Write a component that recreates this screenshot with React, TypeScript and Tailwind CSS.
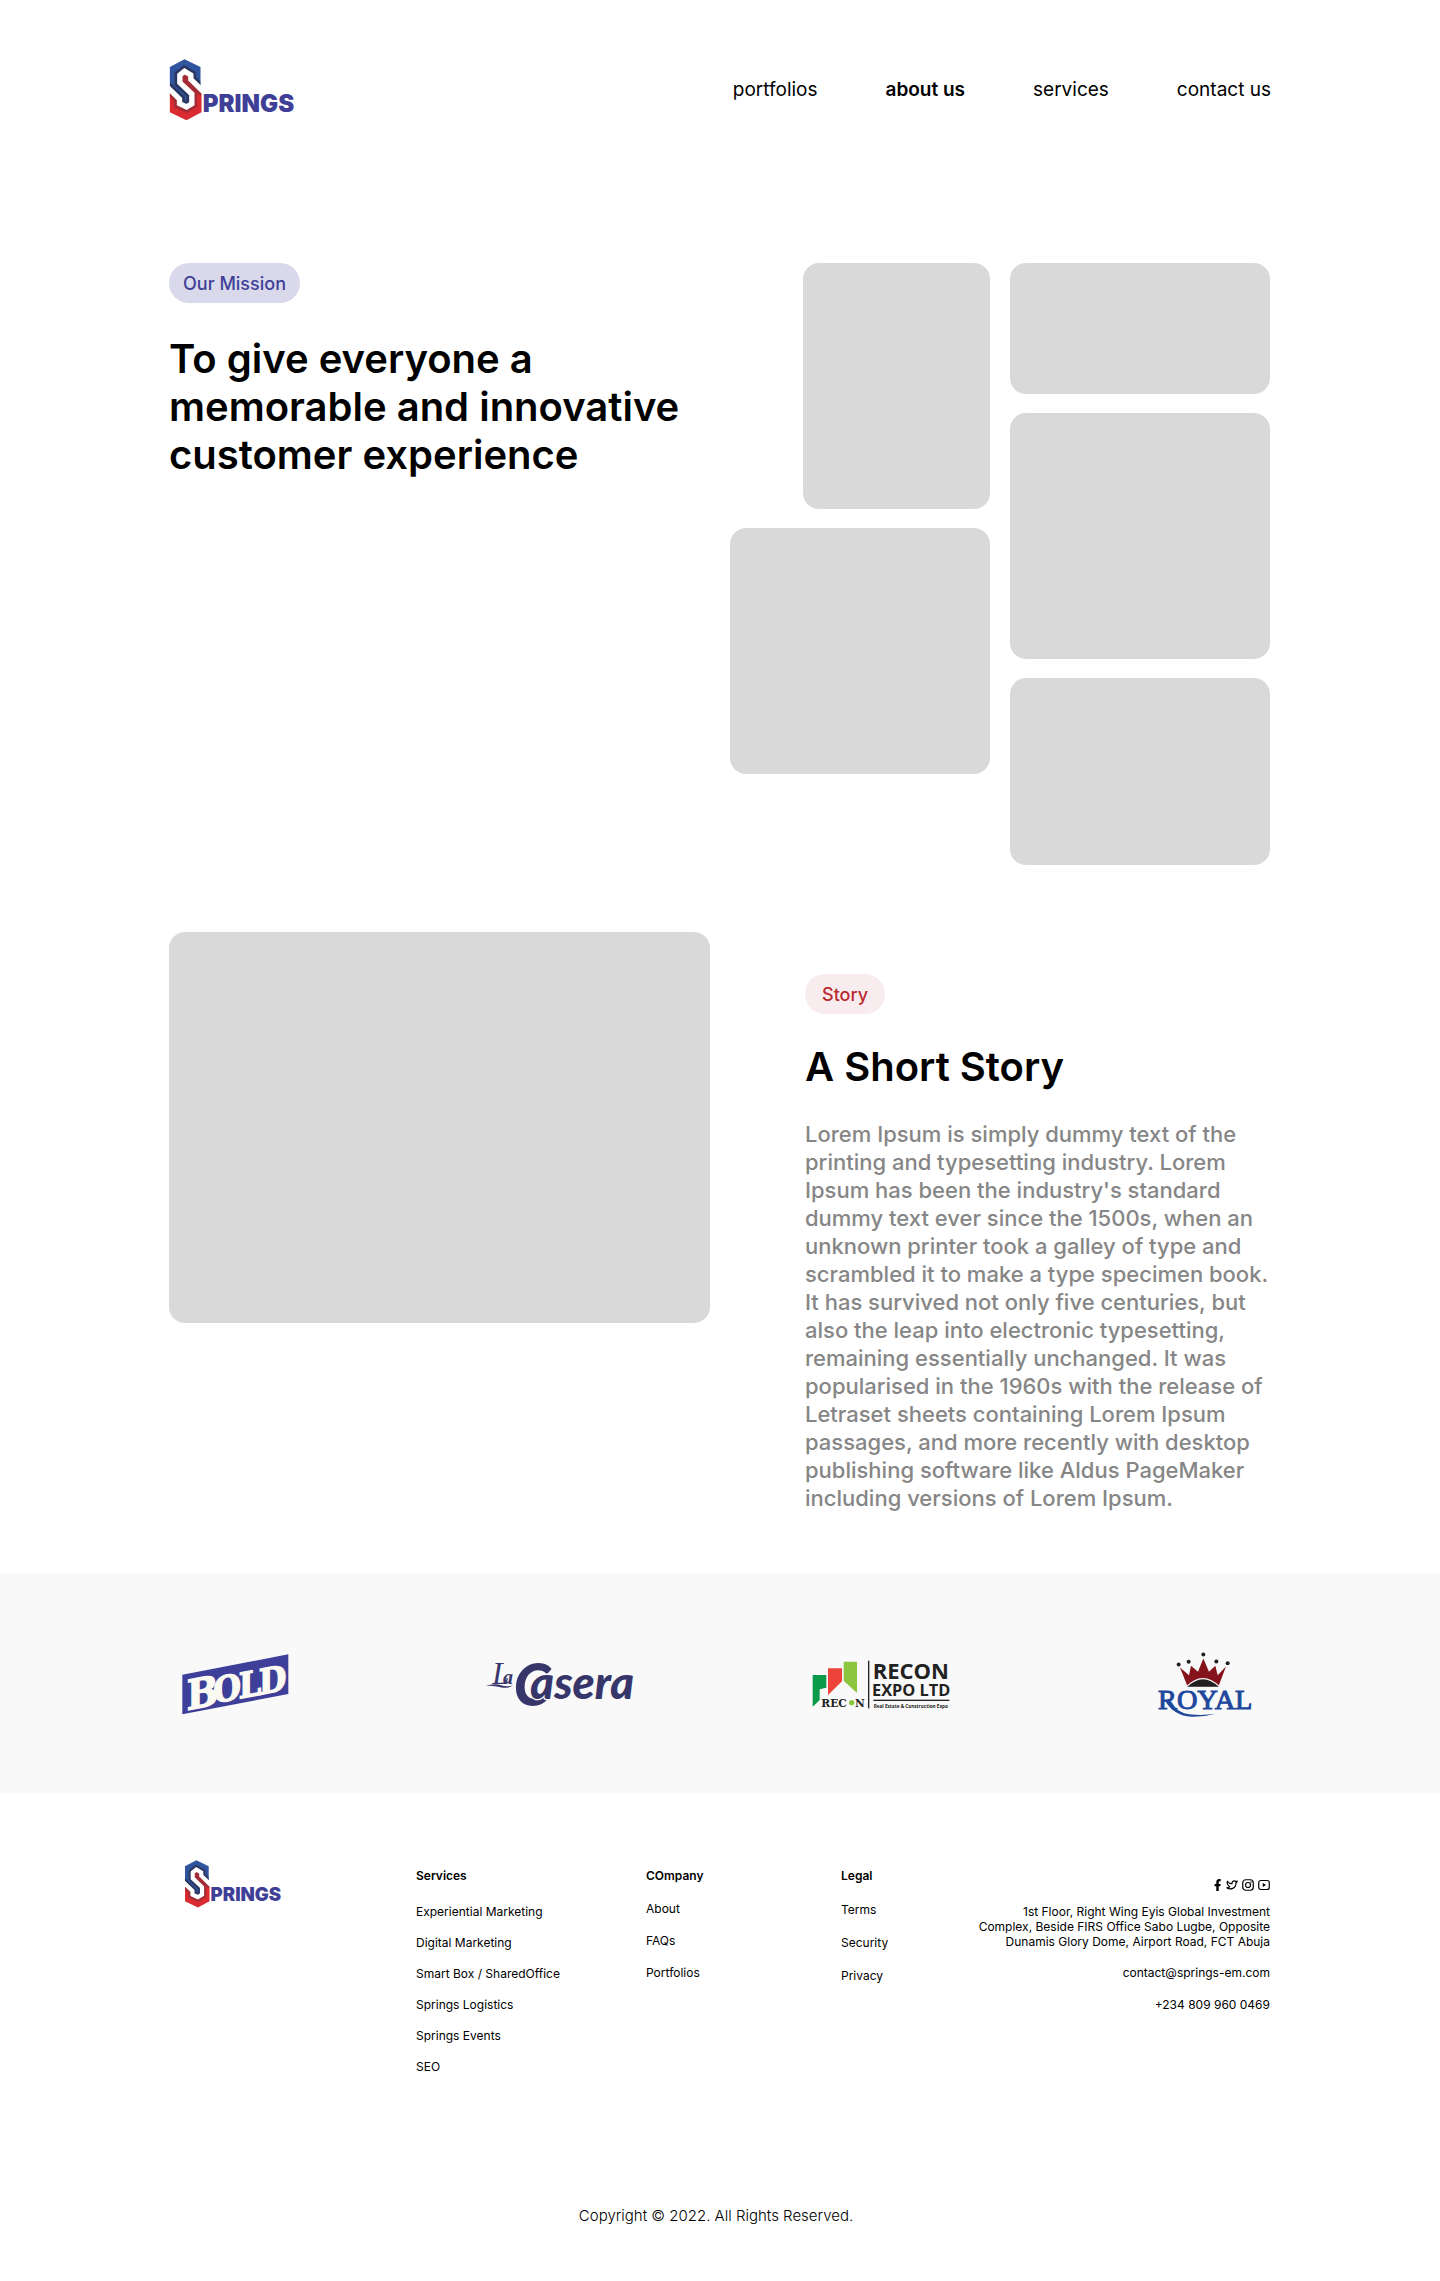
import { useId } from "react";

const S_PATH =
  "162,155 123,117 123,104 104,93 90,104 90,127 126,161 126,190 110,200 89,190 89,176 50,138";
const BLUE =
  "60,80 104,57 152,80 152,145 123,117 123,104 104,93 90,104 90,127 126,161 126,190 110,200 89,190 89,176 60,146";
const RED =
  "155,148 123,117 123,104 104,93 90,104 90,127 126,161 126,190 110,200 89,190 89,176 60,146 60,216 110,240 155,216";

function SpringsLogo({ className }: { className: string }) {
  const id = useId();
  return (
    <svg viewBox="58 56 380 186" className={className} role="img" aria-label="Springs">
      <defs>
        <clipPath id={`${id}b`}>
          <polygon points={BLUE} />
        </clipPath>
        <clipPath id={`${id}r`}>
          <polygon points={RED} />
        </clipPath>
      </defs>
      <polygon points={BLUE} fill="#2f559f" />
      <polygon points={RED} fill="#d92b30" />
      <polyline points={S_PATH} fill="none" stroke="#2a3763" strokeWidth="32" clipPath={`url(#${id}b)`} />
      <polyline points={S_PATH} fill="none" stroke="#a22b35" strokeWidth="32" clipPath={`url(#${id}r)`} />
      <polyline points={S_PATH} fill="none" stroke="#ffffff" strokeWidth="16" />
      <text x="159" y="216" fill="#3f3f97" fontFamily="Inter, sans-serif" fontWeight="900" fontSize="72">
        PRINGS
      </text>
    </svg>
  );
}

function BoldLogo() {
  return (
    <svg viewBox="66 72 321 183" className="h-[61px] w-[107px] overflow-visible" role="img" aria-label="Bold">
      <polygon points="67,134 385,73 385,192 67,253" fill="#3e3f98" />
      <g
        transform="translate(80 244) skewY(-10.8)"
        fill="#fbfaf3"
        stroke="#fbfaf3"
        strokeWidth="4"
        fontFamily="'DejaVu Serif Condensed', 'DejaVu Serif', serif"
        fontWeight="700"
      >
        <text x="0" y="-3" fontSize="124">
          B
          <tspan x="80" y="-8" fontSize="106">O</tspan>
          <tspan x="156" y="-8" fontSize="106">L</tspan>
          <tspan x="216" y="-8" fontSize="106">D</tspan>
        </text>
      </g>
    </svg>
  );
}

function LaCaseraLogo() {
  return (
    <svg viewBox="44 60 444 146" className="h-[49px] w-[148px] overflow-visible" role="img" aria-label="La Casera">
      <g fill="#37366b" fontStyle="italic">
        <text x="66" y="132" fontSize="92" fontFamily="'Liberation Serif', serif">
          L
          <tspan x="98" fontSize="60" fontWeight="700">
            a
          </tspan>
        </text>
        <path d="M46 137 Q74 128 92 135 Q110 141 128 135 Q112 147 90 141 Q70 135 46 137Z" />
        <text x="130" y="198" fontSize="176" fontWeight="900" fontFamily="Lato, sans-serif">
          C
          <tspan x="180" y="178" fontSize="136" stroke="#f9f9f9" strokeWidth="8" paintOrder="stroke">
            asera
          </tspan>
        </text>
      </g>
    </svg>
  );
}

function ReconLogo() {
  return (
    <svg viewBox="68 58 420 150" className="h-[50px] w-[140px] overflow-visible" role="img" aria-label="Recon Expo Ltd">
      <polygon points="70,103 111,103 111,141 91,146 91,178 72,197 70,197" fill="#0b9a4a" />
      <polygon points="116,83 158,83 158,122 116,163" fill="#ee4338" />
      <polygon points="163,63 203,63 203,157 163,120" fill="#8cc63f" />
      <g fill="#222222">
        <text x="96" y="198" fontFamily="'DejaVu Serif', serif" fontWeight="700" fontSize="32">
          REC
          <tspan x="197">N</tspan>
        </text>
        <circle cx="187" cy="186" r="8" fill="#8cc63f" />
        <rect x="236" y="60" width="4" height="143" />
        <text fontFamily="'Open Sans', sans-serif" fontWeight="700">
          <tspan x="250" y="116" fontSize="66">RECON</tspan>
          <tspan x="248" y="167" fontSize="49">EXPO LTD</tspan>
          <tspan x="253" y="202" fontSize="14">Real Estate &amp; Construction Expo</tspan>
        </text>
        <rect x="252" y="177" width="228" height="4" />
      </g>
    </svg>
  );
}

function RoyalLogo() {
  return (
    <svg viewBox="82 64 285 200" className="h-[67px] w-[95px] overflow-visible" role="img" aria-label="Royal">
      <polygon
        points="151,113 178,136 184,108 205,126 221,86 238,126 257,108 264,136 289,110 266,171 174,171"
        fill="#85131b"
      />
      <path d="M168 171 Q220 118 272 171Z" fill="#f9f9f9" />
      <path d="M173 171 Q220 125 267 171Z" fill="#231f20" />
      <g fill="#231f20">
        <circle cx="147" cy="104" r="6" />
        <circle cx="177" cy="96" r="6" />
        <circle cx="221" cy="74" r="6" />
        <circle cx="260" cy="95" r="6" />
        <circle cx="294" cy="100" r="6" />
      </g>
      <g fill="#21479b">
        <text
          x="85"
          y="237"
          fontSize="85"
          fontFamily="'Liberation Serif', serif"
          stroke="#21479b"
          strokeWidth="3"
        >
          ROYAL
        </text>
        <path d="M118 208 Q138 250 186 254 Q222 257 258 252 Q222 262 186 261 Q132 258 106 212Z" />
      </g>
    </svg>
  );
}

const nav = ["portfolios", "about us", "services", "contact us"];

const clients = [
  { name: "bold", Logo: BoldLogo },
  { name: "lacasera", Logo: LaCaseraLogo },
  { name: "recon", Logo: ReconLogo },
  { name: "royal", Logo: RoyalLogo },
];

function FooterColumn({
  title,
  items,
  className,
  listClass,
}: {
  title: string;
  items: string[];
  className: string;
  listClass: string;
}) {
  return (
    <nav aria-label={title} className={className}>
      <h3 className="font-semibold">{title}</h3>
      <ul className={listClass}>
        {items.map((item) => (
          <li key={item}>
            <a href="#" className="block">
              {item}
            </a>
          </li>
        ))}
      </ul>
    </nav>
  );
}

function Socials() {
  return (
    <div className="flex items-center justify-end gap-1">
      <a href="#" aria-label="Facebook">
        <svg viewBox="0 0 8 12" className="h-3 w-2" fill="currentColor">
          <path d="M2.300 12V7.200H.6V4.900h1.700V3.200C2.300 1.200 3.400.1 5.200.1c.8 0 1.500.1 1.500.1v2h-.9c-.9 0-1.100.5-1.100 1.100v1.600h2l-.4 2.300H4.700V12z" />
        </svg>
      </a>
      <a href="#" aria-label="Twitter">
        <svg
          viewBox="0 0 24 24"
          className="size-3"
          fill="none"
          stroke="currentColor"
          strokeWidth="2.400"
          strokeLinejoin="round"
        >
          <path d="M22.500 4.200c-.9.600-1.900.9-2.900 1.200a4.300 4.300 0 0 0-7.600 3v1C8.300 9.500 5 7.700 3 4.500c-1.600 5 .2 8.800 4.500 11-1.600 1.300-3.500 2-6 2 7.500 4.800 18.500 1.500 18.500-9.500 1-.9 2-2.300 2.500-3.800z" />
        </svg>
      </a>
      <a href="#" aria-label="Instagram">
        <svg viewBox="0 0 24 24" className="size-3" fill="none" stroke="currentColor" strokeWidth="2.400">
          <rect x="1.500" y="1.500" width="21" height="21" rx="6" />
          <circle cx="12" cy="12" r="5" />
          <circle cx="18" cy="6" r="1.400" fill="currentColor" stroke="none" />
        </svg>
      </a>
      <a href="#" aria-label="YouTube">
        <svg viewBox="0 0 24 24" className="size-3" fill="none" stroke="currentColor" strokeWidth="2.400">
          <rect x="1.500" y="3" width="21" height="18" rx="4" />
          <path d="M9.500 8v8l6.500-4z" fill="currentColor" stroke="none" />
        </svg>
      </a>
    </div>
  );
}

export default function App() {
  return (
    <div className="bg-white font-['Inter',sans-serif] text-black">
      <header className="mx-auto flex max-w-[1102px] items-center justify-between pt-[59px]">
        <a href="#">
          <SpringsLogo className="h-[62px] w-[127px] overflow-visible" />
        </a>
        <nav className="flex gap-[68px] text-[19px] leading-7">
          {nav.map((item) => (
            <a
              key={item}
              href="#"
              aria-current={item === "about us" ? "page" : undefined}
              className={item === "about us" ? "font-semibold" : ""}
            >
              {item}
            </a>
          ))}
        </nav>
      </header>

      <main>
        <section className="mx-auto mt-[142px] flex max-w-[1102px] justify-between pr-px">
          <div className="max-w-[520px]">
            <span className="inline-flex h-10 items-center rounded-full bg-[#d9d9eb] px-[14px] pt-0.5 text-lg font-medium text-[#3f3f97]">
              Our Mission
            </span>
            <h1 className="mt-8 text-[40px] leading-[48px] font-semibold">
              To give everyone a memorable and innovative customer experience
            </h1>
          </div>
          <div className="flex gap-5">
            <div className="flex w-[260px] flex-col items-end gap-[19px]">
              <div className="h-[246px] w-[187px] rounded-[16px] bg-[#d9d9d9]" />
              <div className="h-[246px] w-full rounded-[16px] bg-[#d9d9d9]" />
            </div>
            <div className="flex w-[260px] flex-col gap-[19px]">
              <div className="h-[131px] rounded-[16px] bg-[#d9d9d9]" />
              <div className="h-[246px] rounded-[16px] bg-[#d9d9d9]" />
              <div className="h-[187px] rounded-[16px] bg-[#d9d9d9]" />
            </div>
          </div>
        </section>

        <section className="mx-auto mt-[67px] flex max-w-[1102px] items-start gap-[95px]">
          <div className="h-[391px] w-[541px] rounded-[16px] bg-[#d9d9d9]" />
          <div className="flex-1 pt-[42px]">
            <span className="inline-flex h-10 items-center rounded-full bg-[#f9ecee] px-[17px] pt-0.5 text-lg font-medium text-[#b92a31]">
              Story
            </span>
            <h2 className="mt-[29px] text-[40px] leading-[48px] font-semibold">A Short Story</h2>
            <p className="mt-[29px] text-[22px] leading-7 font-medium text-[#868686]">
              Lorem Ipsum is simply dummy text of the printing and typesetting industry. Lorem Ipsum has
              been the industry's standard dummy text ever since the 1500s, when an unknown printer took a
              galley of type and scrambled it to make a type specimen book. It has survived not only five
              centuries, but also the leap into electronic typesetting, remaining essentially unchanged. It
              was popularised in the 1960s with the release of Letraset sheets containing Lorem Ipsum
              passages, and more recently with desktop publishing software like Aldus PageMaker including
              versions of Lorem Ipsum.
            </p>
          </div>
        </section>

        <section aria-label="Clients" className="mt-[62px] bg-[#f9f9f9]">
          <div className="mx-auto grid max-w-[1292px] grid-cols-4 place-items-center pt-[77px] pb-[75px]">
            {clients.map(({ name, Logo }) => (
              <Logo key={name} />
            ))}
          </div>
        </section>
      </main>

      <footer className="pt-[67px] pb-14">
        <div className="mx-auto flex max-w-[1102px] pr-px text-xs leading-[15px]">
          <a href="#" className="ml-[15px] w-[232px]">
            <SpringsLogo className="h-12 w-[99px] overflow-visible" />
          </a>
          <FooterColumn
            title="Services"
            className="w-[230px] pt-2"
            listClass="mt-[21px] space-y-4"
            items={[
              "Experiential Marketing",
              "Digital Marketing",
              "Smart Box / SharedOffice",
              "Springs Logistics",
              "Springs Events",
              "SEO",
            ]}
          />
          <FooterColumn
            title="COmpany"
            className="w-[195px] pt-2"
            listClass="mt-[18px] space-y-[17px]"
            items={["About", "FAQs", "Portfolios"]}
          />
          <FooterColumn
            title="Legal"
            className="pt-2"
            listClass="mt-[19px] space-y-[18px]"
            items={["Terms", "Security", "Privacy"]}
          />
          <address className="ml-auto pt-[19px] text-right not-italic">
            <Socials />
            <p className="mt-[13px]">
              1st Floor, Right Wing Eyis Global Investment
              <br />
              Complex, Beside FIRS Office Sabo Lugbe, Opposite
              <br />
              Dunamis Glory Dome, Airport Road, FCT Abuja
            </p>
            <a href="mailto:contact@springs-em.com" className="mt-4 block">
              contact@springs-em.com
            </a>
            <a href="tel:+2348099600469" className="mt-[17px] block">
              +234 809 960 0469
            </a>
          </address>
        </div>
        <p className="mt-[132px] pr-2 text-center text-[15px] leading-5 font-light">
          Copyright © 2022. All Rights Reserved.
        </p>
      </footer>
    </div>
  );
}
